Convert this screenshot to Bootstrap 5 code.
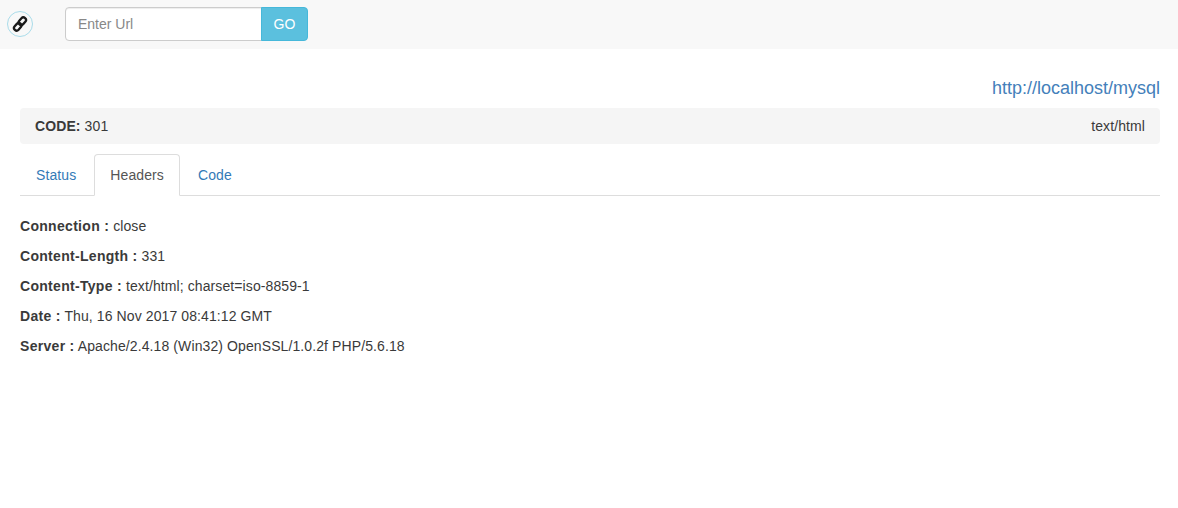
<!DOCTYPE html>
<html lang="en">
<head>
    <meta charset="UTF-8">
    <meta name="viewport" content="width=device-width, initial-scale=1.0">
    <title>Url Checker</title>
    <link href="https://cdn.jsdelivr.net/npm/bootstrap@5.3.3/dist/css/bootstrap.min.css" rel="stylesheet">
    <style>
        body {
          font-family: "Liberation Sans", Arial, sans-serif;
          font-size: 14px;
          line-height: 20px;
          letter-spacing: .1px;
          color: #3a3a3a;
        }
        a { color: #337ab7; text-decoration: none; }
        .top-bar {
          height: 49px;
          background: #f8f8f8;
          padding: 7px 0 0 7px;
        }
        .logo-ring {
          width: 26px;
          height: 26px;
          margin-top: 4px;
          margin-right: 32px;
          border: 1px solid #a9dcea;
          border-radius: 50%;
        }
        .url-group { width: 243px; height: 34px; }
        .url-group .form-control {
          height: 34px;
          padding: 6px 12px;
          font-size: 14px;
          line-height: 20px;
          color: #555;
          border-color: #ccc;
          border-radius: 4px 0 0 4px;
          box-shadow: inset 0 1px 1px rgba(0, 0, 0, .075);
        }
        .url-group .form-control::placeholder { color: #888; letter-spacing: 0; }
        .go-btn {
          width: 47px;
          padding: 6px 0;
          font-size: 14px;
          line-height: 20px;
          color: #fff;
          background: #5bc0de;
          border: 1px solid #46b8da;
          border-radius: 0 4px 4px 0;
        }
        .page-body { padding: 0 18px 0 20px; }
        .req-url {
          padding-top: 28px;
          height: 59px;
          font-size: 18px;
          line-height: 22px;
          letter-spacing: 0;
        }
        .req-url a { color: #4480ba; }
        .code-bar {
          height: 36px;
          padding: 8px 15px;
          margin-bottom: 10px;
          background: #f5f5f5;
          border-radius: 4px;
        }
        .nav-tabs { border-bottom-color: #ddd; margin-bottom: 10px; }
        .nav-tabs .nav-item { margin-right: 2px; }
        .nav-tabs .nav-link {
          padding: 10px 15px;
          color: #337ab7;
          border-radius: 4px 4px 0 0;
        }
        .nav-tabs .nav-link.active { color: #555; border-color: #ddd #ddd #fff; }
        .headers-list { padding-top: 10px; }
        .header-row { margin: 0 0 10px; }
        .header-row b { letter-spacing: .3px; }
    </style>
</head>
<body>
<!-- Top bar -->
<div class="top-bar d-flex align-items-start">
    <a href="#" class="logo-ring d-flex align-items-center justify-content-center flex-shrink-0">
        <svg width="18" height="18" viewBox="0 0 18 18" fill="none" stroke="#1a1a1a" stroke-width="2.3">
            <rect x="8.7" y="2" width="5.2" height="8.4" rx="2.6" transform="rotate(42 11.3 6.2)"/>
            <rect x="4.1" y="7.6" width="5.2" height="8.4" rx="2.6" transform="rotate(42 6.7 11.8)"/>
        </svg>
    </a>
    <form class="url-group input-group flex-nowrap">
        <input type="text" class="form-control" placeholder="Enter Url">
        <button type="button" class="btn go-btn">GO</button>
    </form>
</div>

<div class="page-body">
    <div class="req-url text-end"><a href="#">http://localhost/mysql</a></div>

    <div class="code-bar d-flex justify-content-between">
        <span><b>CODE:</b> 301</span>
        <span>text/html</span>
    </div>

    <!-- Tabs -->
    <ul class="nav nav-tabs">
        <li class="nav-item"><a class="nav-link" href="#">Status</a></li>
        <li class="nav-item"><a class="nav-link active" href="#">Headers</a></li>
        <li class="nav-item"><a class="nav-link" href="#">Code</a></li>
    </ul>

    <!-- Headers -->
    <div class="headers-list">
        <p class="header-row"><b>Connection :</b> close</p>
        <p class="header-row"><b>Content-Length :</b> 331</p>
        <p class="header-row"><b>Content-Type :</b> text/html; charset=iso-8859-1</p>
        <p class="header-row"><b>Date :</b> Thu, 16 Nov 2017 08:41:12 GMT</p>
        <p class="header-row"><b>Server :</b> Apache/2.4.18 (Win32) OpenSSL/1.0.2f PHP/5.6.18</p>
    </div>
</div>

<script src="https://cdn.jsdelivr.net/npm/bootstrap@5.3.3/dist/js/bootstrap.bundle.min.js"></script>
</body>
</html>
